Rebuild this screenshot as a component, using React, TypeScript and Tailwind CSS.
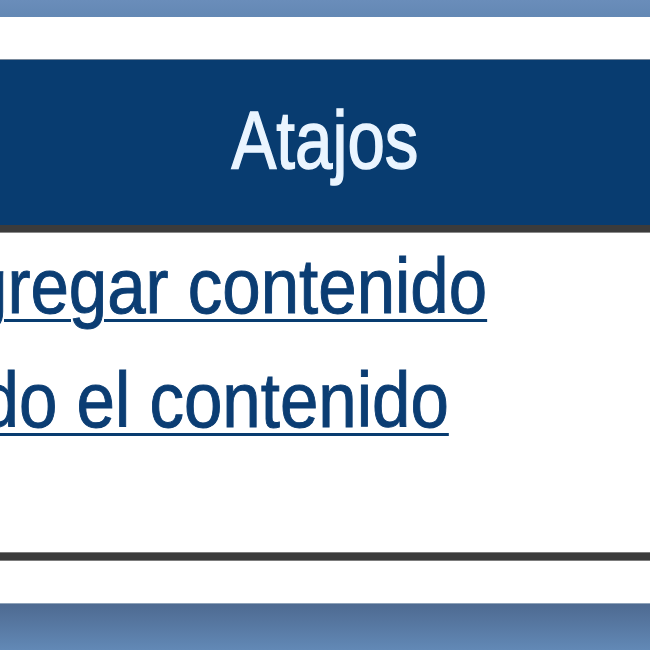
import React from "react";

export default function App() {
  return (
    <div
      className="w-[650px] h-[650px] overflow-hidden flex flex-col bg-white"
      style={{ fontFamily: '"Liberation Sans", Arial, sans-serif' }}
    >
      <div className="h-[17px] shrink-0 bg-gradient-to-b from-[#6a8dba] to-[#6388b4]" />
      <div className="h-[42px] shrink-0 bg-white" />
      <div className="h-px shrink-0 bg-[#7a8a9c]" />
      <div className="h-[165px] shrink-0 bg-[#083c70] flex items-center justify-center pb-[6px]">
        <span className="text-[82px] leading-none text-[#eaf5ff] [-webkit-text-stroke:1.5px_#eaf5ff] scale-x-[0.82] origin-center inline-block">
          Atajos
        </span>
      </div>
      <div className="h-[8px] shrink-0 bg-[#3b3b3b] border-b border-[#8a8a8a]" />
      <div className="h-[319px] shrink-0 bg-white overflow-hidden pt-[3px]">
        <div className="ml-[-77px] flex flex-col gap-[14px]">
          <a
            href="#"
            className="block text-[78px] leading-[100px] whitespace-nowrap text-[#0b3d73] [-webkit-text-stroke:1px_#0b3d73] underline decoration-[3px] underline-offset-[6px] decoration-[#083c70] scale-x-[0.885] origin-left"
          >
            Agregar contenido
          </a>
          <a
            href="#"
            className="block text-[78px] leading-[100px] whitespace-nowrap text-[#0b3d73] [-webkit-text-stroke:1px_#0b3d73] underline decoration-[3px] underline-offset-[6px] decoration-[#083c70] scale-x-[0.885] origin-left"
          >
            todo el contenido
          </a>
        </div>
      </div>
      <div className="h-[9px] shrink-0 bg-[#3b3b3b] border-y border-[#7d7d7d]" />
      <div className="h-[42px] shrink-0 bg-white" />
      <div className="h-px shrink-0 bg-[#8fa3ba]" />
      <div className="flex-1 bg-gradient-to-b from-[#4e6a91] to-[#6289b6]" />
    </div>
  );
}
